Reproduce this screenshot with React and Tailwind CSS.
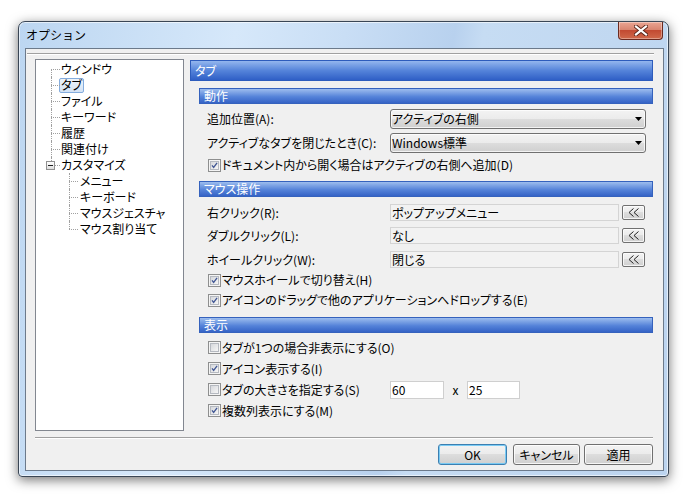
import React from "react";

const tree = [
  { label: "ウィンドウ", first: true },
  { label: "タブ", selected: true },
  { label: "ファイル" },
  { label: "キーワード" },
  { label: "履歴" },
  { label: "関連付け" },
  { label: "カスタマイズ", last: true, expander: true },
];

const children = [
  { label: "メニュー" },
  { label: "キーボード" },
  { label: "マウスジェスチャ" },
  { label: "マウス割り当て", last: true },
];

function Conn({ first, last, expander }) {
  return (
    <span className="relative w-[10px] shrink-0 self-stretch">
      <span
        className={
          "absolute left-0 border-l border-dotted border-[#a0a0a0] " +
          (first ? "top-1/2 " : "top-0 ") +
          (last ? "bottom-1/2" : "bottom-0")
        }
      />
      <span className="absolute left-0 right-[1px] top-1/2 border-t border-dotted border-[#a0a0a0]" />
      {expander && (
        <span className="absolute left-[-5px] top-[4px] flex h-[9px] w-[9px] items-center justify-center border border-[#919191] bg-[linear-gradient(#ffffff,#dedede)]">
          <span className="h-px w-[5px] bg-[#1f1f1f]" />
        </span>
      )}
    </span>
  );
}

function Check({ checked }) {
  return (
    <span className="flex h-[13px] w-[13px] shrink-0 items-center justify-center border border-[#8e8f8f] bg-[#f4f4f4]">
      <span className="flex h-[9px] w-[9px] items-center justify-center border border-[#b5b9c0] bg-[linear-gradient(135deg,#d6d8dc,#f6f6f6)]">
        {checked && (
          <svg width="9" height="9" viewBox="0 0 9 9">
            <path d="M1.3 4.4 L3.4 6.9 L7.8 1.2" fill="none" stroke="#3f5593" strokeWidth="1.7" />
          </svg>
        )}
      </span>
    </span>
  );
}

function CheckRow({ checked, children, h = "h-[20px]" }) {
  return (
    <div className={"flex items-center gap-[1px] pl-[18px] " + h}>
      <Check checked={checked} />
      <span>{children}</span>
    </div>
  );
}

function Combo({ value }) {
  return (
    <div className="flex h-[20px] w-[256px] items-center justify-between rounded-[3px] border border-[#707070] bg-[linear-gradient(#f3f3f3_0%,#ebebeb_50%,#dddddd_50%,#cfcfcf_100%)] pl-[1px] pr-[3px] shadow-[inset_0_0_0_1px_rgba(255,255,255,0.75)]">
      <span>{value}</span>
      <svg width="7" height="4" viewBox="0 0 7 4">
        <path d="M0 0h7L3.5 4z" fill="#000" />
      </svg>
    </div>
  );
}

function PickRow({ label, value, mt }) {
  return (
    <div className={"flex h-[19px] items-center pl-[17px] " + mt}>
      <span className="w-[183px]">{label}</span>
      <div className="flex h-[17px] w-[229px] items-center border border-[#d4d4d4] bg-[#f2f2f2] pl-[1px]">
        {value}
      </div>
      <div className="ml-[3px] flex h-[15px] w-[23px] items-center justify-center rounded-[2px] border border-[#707070] bg-[linear-gradient(#f3f3f3_0%,#ebebeb_50%,#dddddd_50%,#cfcfcf_100%)] shadow-[inset_0_0_0_1px_rgba(255,255,255,0.75)]">
        <svg width="12" height="9" viewBox="0 0 12 9">
          <path d="M5.5 0.5 L1 4.5 L5.5 8.5 M10.5 0.5 L6 4.5 L10.5 8.5" fill="none" stroke="#222" strokeWidth="1" />
        </svg>
      </div>
    </div>
  );
}

function Section({ children, mt }) {
  return (
    <div className={"ml-[9px] flex h-[16px] items-center border border-[#3562bd] bg-[linear-gradient(#9dbdee,#5583d9_55%,#3563c6)] pl-[4px] text-white " + mt}>
      {children}
    </div>
  );
}

function Button({ children, w, def, ml }) {
  return (
    <div
      className={
        "flex h-[21px] items-center justify-center rounded-[3px] border bg-[linear-gradient(#f3f3f3_0%,#ebebeb_50%,#dddddd_50%,#cfcfcf_100%)] " +
        w +
        " " +
        ml +
        (def
          ? " border-[#3c7fb1] shadow-[inset_0_0_0_1px_rgba(110,200,245,0.9)]"
          : " border-[#707070] shadow-[inset_0_0_0_1px_rgba(255,255,255,0.8)]")
      }
    >
      {children}
    </div>
  );
}

export default function App() {
  return (
    <div className="h-[499px] w-[693px] overflow-hidden bg-white pl-[18px] pt-[21px] font-['Noto_Sans_CJK_JP','Noto_Sans',sans-serif] text-[12px] leading-none text-black [font-feature-settings:'palt']">
      <div className="flex h-[456px] w-[651px] flex-col rounded-t-[7px] rounded-b-[4px] border border-[#3a4655] bg-[linear-gradient(100deg,#bcd6f1_0%,#d6e8fa_30%,#c9def5_45%,#b8d1ee_60%,#c6dcf3_64%,#bcd4ef_100%)] shadow-[0_3px_12px_rgba(0,0,0,0.55),inset_0_0_0_1px_rgba(255,255,255,0.6)]">
        <div className="flex h-[26px] shrink-0 items-start justify-between">
          <span className="pl-[7px] pt-[7px] [font-feature-settings:normal]">オプション</span>
          <div className="mr-[5px] flex h-[18px] w-[45px] items-center justify-center rounded-b-[4px] border border-t-0 border-[#6b2a20] bg-[linear-gradient(#eaa593_0%,#d98570_45%,#c24a32_50%,#d0694b_100%)] shadow-[inset_0_0_0_1px_rgba(255,255,255,0.35)]">
            <svg width="14" height="11" viewBox="0 0 14 11">
              <path d="M2 1.5 L12 9.5 M12 1.5 L2 9.5" stroke="#5a2418" strokeWidth="4" strokeLinecap="square" />
              <path d="M2 1.5 L12 9.5 M12 1.5 L2 9.5" stroke="#fff" strokeWidth="2.2" strokeLinecap="square" />
            </svg>
          </div>
        </div>

        <div className="mb-[5px] ml-[6px] mr-[4px] flex flex-1 flex-col border border-[#6c7a8b] bg-[#f0f0f0]">
          <div className="ml-[1px] mt-[4px] h-[2px] w-[627px] border-t border-b border-t-[#a0a0a0] border-b-white" />

          <div className="mt-[4px] flex pl-[9px]">
            <div className="h-[372px] w-[149px] border border-[#828790] bg-white pt-[1px]">
              {tree.map((t) => (
                <div key={t.label} className="flex h-[16px] items-center">
                  <span className="w-[15px] shrink-0" />
                  <Conn first={t.first} last={t.last} expander={t.expander} />
                  {t.selected ? (
                    <span className="-ml-[2px] flex h-[15px] items-center rounded-[2px] border border-[#84acdd] bg-[linear-gradient(#eef4fb,#d3e2f4)] px-[1px]">
                      {t.label}
                    </span>
                  ) : (
                    <span>{t.label}</span>
                  )}
                </div>
              ))}
              {children.map((t) => (
                <div key={t.label} className="flex h-[16px] items-center">
                  <span className="w-[33px] shrink-0" />
                  <Conn last={t.last} />
                  <span className="ml-[1px]">{t.label}</span>
                </div>
              ))}
            </div>

            <div className="ml-[6px] w-[463px]">
              <div className="mt-[1px] flex h-[21px] items-center border border-[#2d5cbc] bg-[linear-gradient(#93b6ee,#5584da_50%,#2f5fc6)] pl-[4px] text-white">
                タブ
              </div>

              <Section mt="mt-[7px]">動作</Section>
              <div className="mt-[5px] flex h-[20px] items-center pl-[17px]">
                <span className="w-[183px]">追加位置(A):</span>
                <Combo value="アクティブの右側" />
              </div>
              <div className="mt-[4px] flex h-[20px] items-center pl-[17px]">
                <span className="w-[183px]">アクティブなタブを閉じたとき(C):</span>
                <Combo value="Windows標準" />
              </div>
              <div className="mt-[2px]">
                <CheckRow checked>ドキュメント内から開く場合はアクティブの右側へ追加(D)</CheckRow>
              </div>

              <Section mt="mt-[6px]">マウス操作</Section>
              <PickRow mt="mt-[6px]" label="右クリック(R):" value="ポップアップメニュー" />
              <PickRow mt="mt-[4px]" label="ダブルクリック(L):" value="なし" />
              <PickRow mt="mt-[5px]" label="ホイールクリック(W):" value="閉じる" />
              <div className="mt-[1px]">
                <CheckRow checked>マウスホイールで切り替え(H)</CheckRow>
                <CheckRow checked>アイコンのドラッグで他のアプリケーションへドロップする(E)</CheckRow>
              </div>

              <Section mt="mt-[7px]">表示</Section>
              <div className="mt-[4px]">
                <CheckRow h="h-[21px]">タブが1つの場合非表示にする(O)</CheckRow>
                <CheckRow h="h-[21px]" checked>アイコン表示する(I)</CheckRow>
                <div className="flex h-[21px] items-center pl-[18px]">
                  <div className="flex w-[182px] items-center gap-[1px]">
                    <Check />
                    <span>タブの大きさを指定する(S)</span>
                  </div>
                  <div className="flex h-[18px] w-[54px] items-center border border-[#cfcfcf] bg-white pl-[1px]">60</div>
                  <span className="w-[23px] text-center">x</span>
                  <div className="flex h-[18px] w-[53px] items-center border border-[#cfcfcf] bg-white pl-[1px]">25</div>
                </div>
                <CheckRow h="h-[21px]" checked>複数列表示にする(M)</CheckRow>
              </div>
            </div>
          </div>

          <div className="ml-[9px] mt-[6px] h-[2px] w-[618px] border-t border-b border-t-[#a0a0a0] border-b-white" />

          <div className="mt-[5px] flex justify-end pr-[10px]">
            <Button w="w-[69px]" def>OK</Button>
            <Button w="w-[67px]" ml="ml-[6px]">キャンセル</Button>
            <Button w="w-[69px]" ml="ml-[4px]">適用</Button>
          </div>
        </div>
      </div>
    </div>
  );
}
